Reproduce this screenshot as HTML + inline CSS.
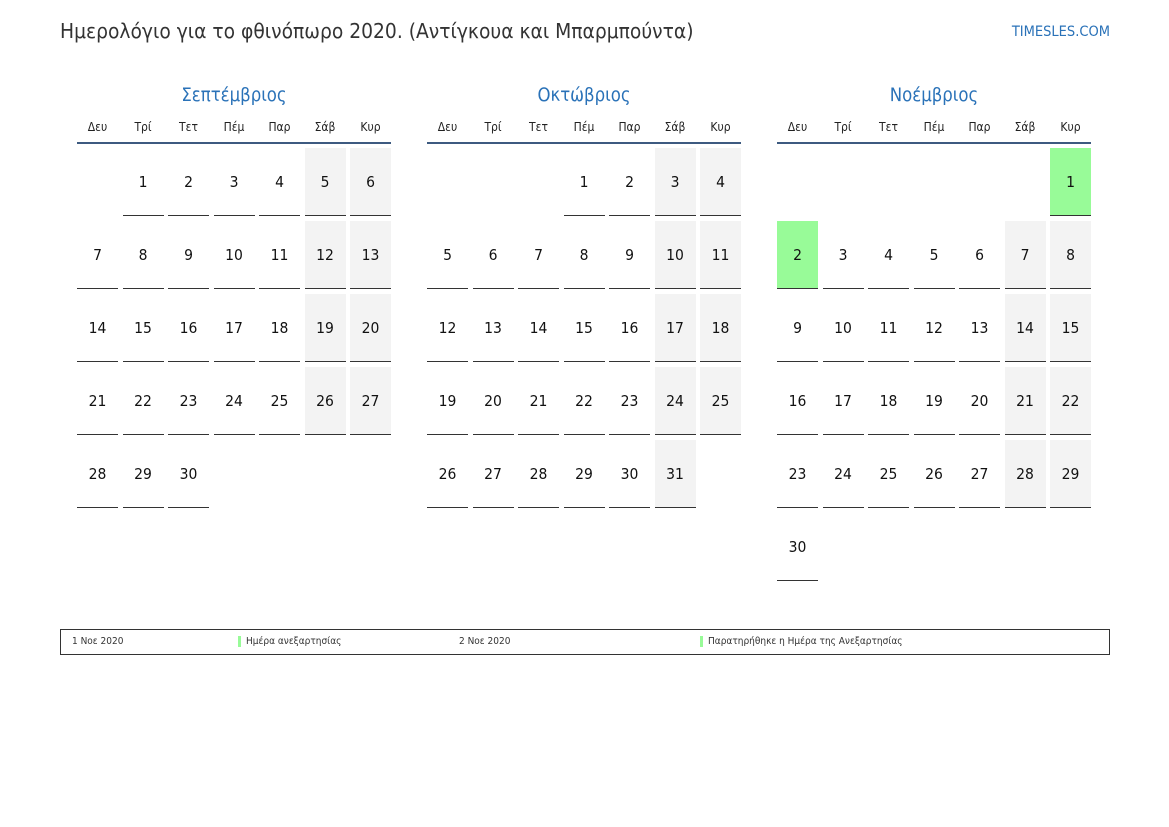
<!DOCTYPE html>
<html><head><meta charset="utf-8"><style>
body{margin:0;width:1169px;height:827px;background:#fff;font-family:"DejaVu Sans Condensed","DejaVu Sans","Liberation Sans",sans-serif;font-stretch:condensed;position:relative;overflow:hidden}
.title{position:absolute;left:60px;top:19px;font-size:20.8px;color:#333}
.site{position:absolute;right:59px;top:24px;font-size:14.5px;color:#2a72b8}
.month{position:absolute;top:85px;width:314px}
.mt{text-align:center;font-size:18.4px;color:#2a72b8;height:24px;line-height:22px}
.hd{display:grid;grid-template-columns:repeat(7,41px);column-gap:4.5px;margin-top:9px;height:24px;border-bottom:2px solid #3d5a80;font-size:12px;color:#222}
.hd div{text-align:center;line-height:18px}
.gr{display:grid;grid-template-columns:repeat(7,41px);grid-auto-rows:68px;column-gap:4.5px;row-gap:5px;margin-top:4px}
.gr div{display:flex;align-items:center;justify-content:center;font-size:15.5px;color:#111;border-bottom:1px solid #333}
.gr div.e{border:none}
.gr div.w{background:#f3f3f3}
.gr div.g{background:#98fb98}
.leg{position:absolute;left:60px;top:629px;width:1048px;height:24px;border:1px solid #333;font-size:10px;color:#333}
.leg span{position:absolute;top:6px}
.bar{border-left:3px solid #98fb98;padding-left:5px}
</style></head><body>
<div class="title">Ημερολόγιο για το φθινόπωρο 2020. (Αντίγκουα και Μπαρμπούντα)</div>
<div class="site">TIMESLES.COM</div>

<div class="month" style="left:77px">
<div class="mt">Σεπτέμβριος</div>
<div class="hd"><div>Δευ</div><div>Τρί</div><div>Τετ</div><div>Πέμ</div><div>Παρ</div><div>Σάβ</div><div>Κυρ</div></div>
<div class="gr">
<div class="e"></div><div>1</div><div>2</div><div>3</div><div>4</div><div class="w">5</div><div class="w">6</div>
<div>7</div><div>8</div><div>9</div><div>10</div><div>11</div><div class="w">12</div><div class="w">13</div>
<div>14</div><div>15</div><div>16</div><div>17</div><div>18</div><div class="w">19</div><div class="w">20</div>
<div>21</div><div>22</div><div>23</div><div>24</div><div>25</div><div class="w">26</div><div class="w">27</div>
<div>28</div><div>29</div><div>30</div>
</div></div>

<div class="month" style="left:427px">
<div class="mt">Οκτώβριος</div>
<div class="hd"><div>Δευ</div><div>Τρί</div><div>Τετ</div><div>Πέμ</div><div>Παρ</div><div>Σάβ</div><div>Κυρ</div></div>
<div class="gr">
<div class="e"></div><div class="e"></div><div class="e"></div><div>1</div><div>2</div><div class="w">3</div><div class="w">4</div>
<div>5</div><div>6</div><div>7</div><div>8</div><div>9</div><div class="w">10</div><div class="w">11</div>
<div>12</div><div>13</div><div>14</div><div>15</div><div>16</div><div class="w">17</div><div class="w">18</div>
<div>19</div><div>20</div><div>21</div><div>22</div><div>23</div><div class="w">24</div><div class="w">25</div>
<div>26</div><div>27</div><div>28</div><div>29</div><div>30</div><div class="w">31</div>
</div></div>

<div class="month" style="left:777px">
<div class="mt">Νοέμβριος</div>
<div class="hd"><div>Δευ</div><div>Τρί</div><div>Τετ</div><div>Πέμ</div><div>Παρ</div><div>Σάβ</div><div>Κυρ</div></div>
<div class="gr">
<div class="e"></div><div class="e"></div><div class="e"></div><div class="e"></div><div class="e"></div><div class="e"></div><div class="g">1</div>
<div class="g">2</div><div>3</div><div>4</div><div>5</div><div>6</div><div class="w">7</div><div class="w">8</div>
<div>9</div><div>10</div><div>11</div><div>12</div><div>13</div><div class="w">14</div><div class="w">15</div>
<div>16</div><div>17</div><div>18</div><div>19</div><div>20</div><div class="w">21</div><div class="w">22</div>
<div>23</div><div>24</div><div>25</div><div>26</div><div>27</div><div class="w">28</div><div class="w">29</div>
<div>30</div>
</div></div>

<div class="leg">
<span style="left:11px">1 Νοε 2020</span>
<span class="bar" style="left:177px">Ημέρα ανεξαρτησίας</span>
<span style="left:398px">2 Νοε 2020</span>
<span class="bar" style="left:639px">Παρατηρήθηκε η Ημέρα της Ανεξαρτησίας</span>
</div>
</body></html>
